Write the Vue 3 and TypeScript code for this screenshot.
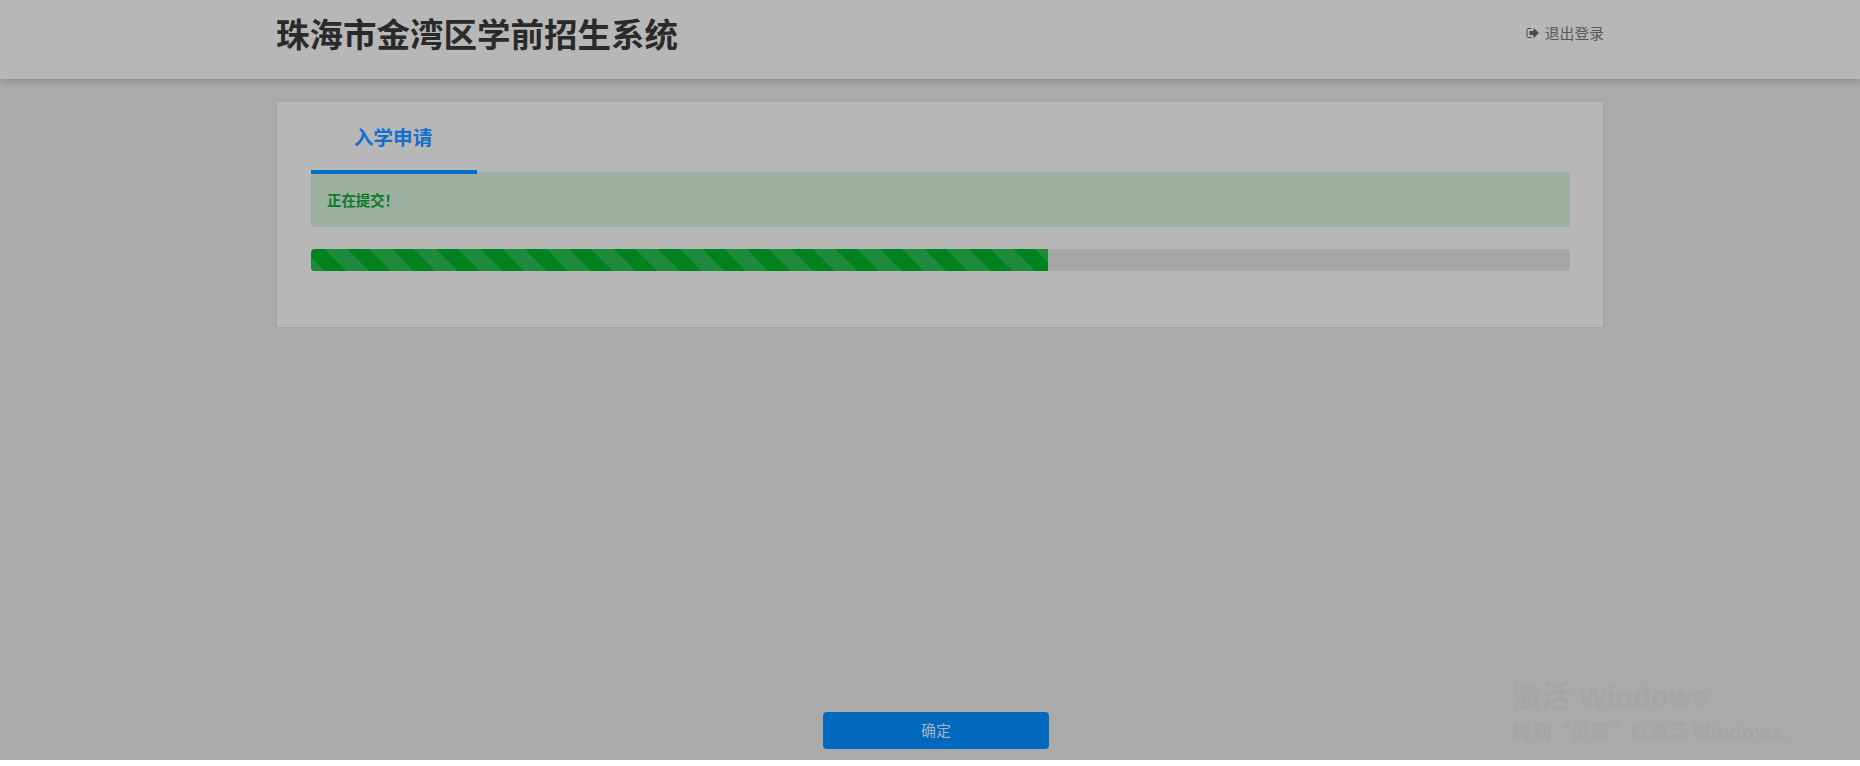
<script setup lang="ts">
const percent = 58.5;
</script>

<template>
  <div class="page">
    <header class="header">
      <h1 class="title">珠海市金湾区学前招生系统</h1>
      <a class="logout">
        <svg class="logout-icon" viewBox="0 0 1792 1792" aria-hidden="true">
          <path d="M704 1440q0 4 1 20t.5 26.5-3 23.5-10 19.5-20.5 6.5h-320q-119 0-203.5-84.5t-84.5-203.5v-704q0-119 84.5-203.5t203.5-84.5h320q13 0 22.5 9.5t9.5 22.5q0 4 1 20t.5 26.5-3 23.5-10 19.5-20.5 6.5h-320q-66 0-113 47t-47 113v704q0 66 47 113t113 47h312l11.5 1 11.5 3 8 5.5 7 9 2 13.5zm928-544q0 26-19 45l-544 544q-19 19-45 19t-45-19-19-45v-288h-448q-26 0-45-19t-19-45v-384q0-26 19-45t45-19h448v-288q0-26 19-45t45-19 45 19l544 544q19 19 19 45z" />
        </svg>
        退出登录
      </a>
    </header>

    <main class="card">
      <div class="tabs">
        <div class="tab">入学申请</div>
      </div>
      <div class="alert">正在提交！</div>
      <div class="progress">
        <div class="progress-bar" :style="{ width: percent + '%' }"></div>
      </div>
    </main>

    <footer class="footer">
      <button class="confirm">确定</button>
    </footer>

    <div class="watermark">
      <div class="wm-title">激活 Windows</div>
      <div class="wm-sub">转到“设置”以激活 Windows。</div>
    </div>
  </div>
</template>

<style scoped>
.page {
  position: relative;
  display: flex;
  flex-direction: column;
  height: 760px;
  background: #aaaaaa;
  overflow: hidden;
  font-family: "Noto Sans CJK SC", "Liberation Sans", sans-serif;
}

.header {
  display: flex;
  align-items: center;
  justify-content: space-between;
  flex: none;
  height: 79px;
  padding: 0 256px 0 276px;
  background: #b7b7b7;
  box-shadow: 0 2px 8px rgba(0, 0, 0, 0.2);
}

.title {
  margin: 0 0 12px;
  font-size: 33.5px;
  font-weight: 700;
  line-height: 1.2;
  color: #2a2a2a;
}

.logout {
  display: flex;
  align-items: center;
  gap: 5px;
  margin-bottom: 14px;
  font-size: 14.8px;
  color: #585858;
}

.logout-icon {
  width: 14px;
  height: 14px;
  fill: #4a4a4a;
}

.card {
  flex: none;
  box-sizing: border-box;
  width: 1326px;
  height: 225px;
  margin: 23px 0 0 277px;
  padding: 0 33px 0 34px;
  background: #b7b7b7;
  box-shadow: 0 0 2px rgba(0, 0, 0, 0.1);
}

.tabs {
  display: flex;
  height: 70px;
  border-bottom: 2px solid #a8aca8;
}

.tab {
  box-sizing: border-box;
  width: 166px;
  height: 72px;
  padding: 20px 2px 0 0;
  border-bottom: 4px solid #0070c8;
  text-align: center;
  font-size: 19.7px;
  font-weight: 700;
  line-height: 30px;
  color: #1470cc;
}

.alert {
  height: 53px;
  padding-left: 16px;
  border-radius: 0 0 3px 3px;
  background: #9cb09f;
  font-size: 14.4px;
  font-weight: 700;
  line-height: 51px;
  color: #0c7a2a;
}

.progress {
  height: 22px;
  margin-top: 22px;
  border-radius: 4px;
  background: #a6a6a6;
  overflow: hidden;
}

.progress-bar {
  height: 100%;
  background-color: #00831f;
  background-image: linear-gradient(
    45deg,
    #1e8a3b 25%,
    transparent 25%,
    transparent 50%,
    #1e8a3b 50%,
    #1e8a3b 75%,
    transparent 75%,
    transparent
  );
  background-size: 44.4px 44.4px;
  background-position: 14px 0;
}

.footer {
  margin-top: auto;
  padding: 0 0 11px 823px;
}

.confirm {
  display: block;
  width: 226px;
  height: 37px;
  padding: 0 0 2px;
  border: none;
  border-radius: 4px;
  background: #0069be;
  font-family: inherit;
  font-size: 15px;
  color: #a5b5c5;
}

.watermark {
  position: absolute;
  left: 1512px;
  top: 678px;
  color: #a5a5a5;
  font-family: "Noto Sans CJK SC", "Open Sans", sans-serif;
  font-weight: 700;
  white-space: nowrap;
}

.wm-title {
  font-family: "Liberation Sans", "Noto Sans CJK SC", sans-serif;
  font-size: 29.5px;
  line-height: 38px;
}

.wm-sub {
  font-size: 19.6px;
  line-height: 30px;
}
</style>

<style>
html,
body {
  background: #fff;
}
</style>
